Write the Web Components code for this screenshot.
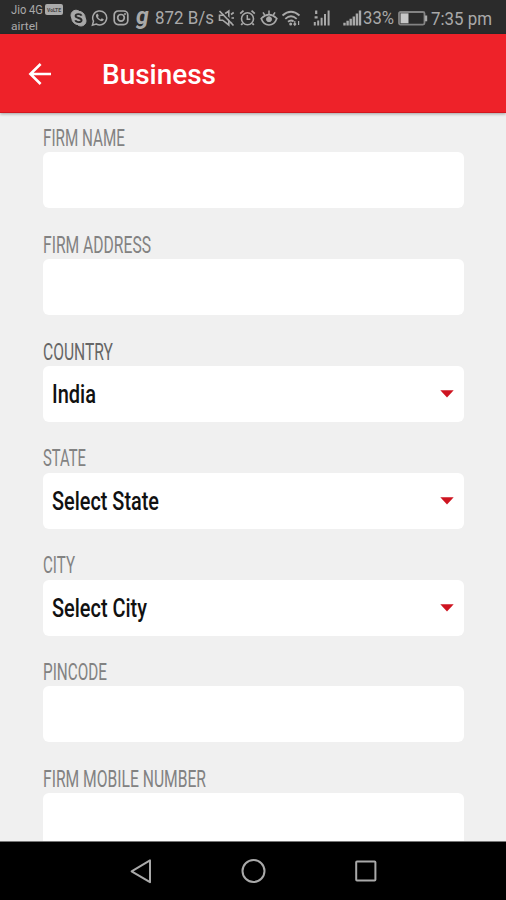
<!DOCTYPE html>
<html lang="en">
<head>
<meta charset="utf-8">
<title>Business</title>
<style>
html,body{margin:0;height:100%;overflow:hidden;background:#f0f0f0}
</style>
</head>
<body>
<phone-screen></phone-screen>
<script>
const define = (name, html, setup) => customElements.define(name, class extends HTMLElement {
  connectedCallback() {
    if (this.shadowRoot) return;
    const root = this.attachShadow({ mode: 'open' });
    const t = document.createElement('template');
    t.innerHTML = html;
    root.append(t.content.cloneNode(true));
    if (setup) setup(this, root);
  }
});

// One line of text condensed to a given width.
define('fit-text', `
<style>:host{display:block;flex:none}svg{display:block;overflow:visible}text{fill:currentColor;font-family:Roboto,"Liberation Sans",sans-serif}</style>
<svg><text x="0" lengthAdjust="spacingAndGlyphs"></text></svg>`, (el, root) => {
  const w = +el.getAttribute('width'), s = +el.getAttribute('size');
  const svg = root.querySelector('svg'), text = root.querySelector('text');
  const h = Math.round(s * 1.2);
  svg.setAttribute('width', w); svg.setAttribute('height', h);
  text.setAttribute('y', h / 2 + s * 0.355);
  text.setAttribute('textLength', w);
  text.setAttribute('font-size', s);
  text.setAttribute('font-weight', el.getAttribute('weight') || 400);
  text.textContent = el.getAttribute('text');
});

const icons = {
  skype: [17, `<circle cx="6" cy="6.2" r="5" fill="currentColor"/><circle cx="8.5" cy="9" r="6.7" fill="currentColor"/><circle cx="11" cy="12" r="5" fill="currentColor"/><path d="M11.6 6.7C10.7 4.6 5.6 4.6 5.6 7c0 2.5 6 1.5 6 4.2 0 2.6-5.5 2.4-6.3.1" stroke="#2b2b2b" stroke-width="1.9"/>`],
  whatsapp: [17, `<path d="M1.4 16.2l1.1-4A7 7 0 1 1 5.2 15z" stroke-width="1.5"/><path d="M5.7 5.1c.8-.6 1.3-.2 2 1.8l-.8 1c.7 1.3 1.5 2 2.8 2.5l1-1.1 2 1c.2 1.3-1.3 2.1-2.6 1.8-2.8-.7-5.4-3.6-5.2-5.5 0-.6.4-1.2.8-1.5z" fill="currentColor" stroke="none"/>`],
  insta: [16, `<rect x="1.2" y="2" width="13.6" height="13.6" rx="4" stroke-width="1.7"/><circle cx="8" cy="8.8" r="3.3" stroke-width="1.7"/><circle cx="12" cy="4.9" r="1" fill="currentColor" stroke="none"/>`],
  mute: [17, `<path d="M1.5 6.2h3.2L10.8 2v14L4.7 11.2H1.5zM13 5.5l2.7-2M13.5 9h2.5M13 12.5l2 1" stroke-width="1.6"/><path d="M2.5 1l14 14" stroke="#2b2b2b" stroke-width="1.6"/><path d="M1.5 2l14 14.5" stroke-width="1.7"/>`],
  alarm: [17, `<circle cx="8.5" cy="9.7" r="6" stroke-width="1.6"/><path d="M1.2 4.6l3.3-3M15.8 4.6l-3.3-3M3.6 14.4L2.2 16M13.4 14.4l1.4 1.6" stroke-width="1.8"/><path d="M8.3 6v4.2h3" stroke-width="1.5"/>`],
  eye: [18, `<path d="M1.2 9.5Q9 1.8 16.8 9.5 14.5 16 9 16T1.2 9.5z" stroke-width="1.7"/><circle cx="9" cy="10.2" r="2.5" fill="currentColor"/><path d="M9 5V1.6M4.7 6L3 3.3M13.3 6L15 3.3" stroke-width="1.5"/>`],
  wifi: [20, `<path d="M1.5 6.5Q10-1 18.5 6.5M4.3 9.8Q10 4.6 15.7 9.8M7 12.8q3-2.5 5.6-.3" stroke-width="1.8"/><circle cx="9.7" cy="15" r="1.5" fill="currentColor" stroke="none"/><path d="M13.8 12v4m-1.3-1.4l1.3 1.6 1.3-1.6M17.6 16v-4" stroke-width="1.2"/>`],
  sigx: [18, `<path d="M1.8 13v3.4M5.2 11.5v4.9M8.6 8.7v7.7M12 5v11.4M15.6 1.6v14.8" stroke-width="2"/><path d="M3.2 1.4v3.6M1.6 8.3h3" stroke-width="2.2"/>`],
  sig: [19, `<path d="M1.5 13.7v2.7M4.6 11.8v4.6M7.7 9.7v6.7M10.8 7.4v9M13.9 4.6v11.8M17 1.6v14.8" stroke-width="2.4"/>`],
  battery: [30, `<rect x="1" y="3" width="25.5" height="12.6" rx="1.5" stroke-width="1.8" opacity=".7"/><rect x="2.5" y="4.3" width="8" height="10" fill="#c8c8c8" stroke="none"/><path d="M28 6.5v5.8" stroke-width="2.4"/>`]
};
define('status-icon', `<style>:host{display:block;flex:none}svg{display:block;fill:none;stroke:currentColor}</style>`, (el, root) => {
  const [w, body] = icons[el.getAttribute('name')];
  const box = document.createElement('div');
  box.innerHTML = `<svg width="${w}" height="18" viewBox="0 0 ${w} 18">${body}</svg>`;
  root.append(box);
});

define('status-bar', `
<style>
:host{display:flex;align-items:center;height:34px;padding:1px 0 0 11px;box-sizing:border-box;background:#2b2b2b;color:#a9a9a9}
.carrier{width:59px;display:flex;flex-direction:column;gap:2px}
.top{display:flex;align-items:center;gap:2px}
.volte{width:18px;height:11px;border-radius:2px;background:#aaa;color:#444;display:flex;align-items:center;justify-content:center}
.g{font:italic 700 23px/20px Roboto,sans-serif;width:12px;margin:-1px 7px 0 7px}
</style>
<div class="carrier"><div class="top"><fit-text text="Jio 4G" width="32" size="12"></fit-text><span class="volte"><fit-text text="VoLTE" width="14" size="6" weight="700"></fit-text></span></div><fit-text text="airtel" width="27" size="11.5"></fit-text></div>
<status-icon name="skype"></status-icon>
<status-icon name="whatsapp" style="margin-left:4px"></status-icon>
<status-icon name="insta" style="margin-left:5px"></status-icon>
<span class="g">g</span>
<fit-text text="872 B/s" width="59" size="18"></fit-text>
<status-icon name="mute" style="margin-left:4px"></status-icon>
<status-icon name="alarm" style="margin-left:4px"></status-icon>
<status-icon name="eye" style="margin-left:4px"></status-icon>
<status-icon name="wifi" style="margin-left:3px"></status-icon>
<status-icon name="sigx" style="margin-left:12px"></status-icon>
<status-icon name="sig" style="margin-left:12px"></status-icon>
<fit-text text="33%" width="31" size="18" style="margin-left:1px"></fit-text>
<status-icon name="battery" style="margin-left:4px"></status-icon>
<fit-text text="7:35 pm" width="61" size="18.5" style="margin-left:3px"></fit-text>`);

define('app-bar', `
<style>
:host{display:flex;align-items:center;height:79px;box-sizing:border-box;padding:2px 0 0 28px;gap:50px;background:#ee2229;border-bottom:1px solid #d3161e;color:#fff;box-shadow:0 1px 3px #0005;z-index:1}
svg{display:block;margin-top:-1px}
</style>
<svg width="24" height="24" viewBox="0 0 24 24" fill="none" stroke="#fff" stroke-width="2.6"><path d="M23 12H2.5M12.6 2L2.4 12l10.2 10"/></svg>
<fit-text text="Business" width="114" size="27.5" weight="500"></fit-text>`);

define('form-field', `
<style>
:host{display:block;height:84px;margin-bottom:22.9px}
.label{height:28px;display:flex;align-items:center;box-sizing:border-box;padding-bottom:.5px;color:#828282}
:host([dark]) .label{color:#666}
.box{height:56px;box-sizing:border-box;display:flex;align-items:center;justify-content:space-between;padding:0 10px 1px 9px;background:#fff;border-radius:6px;color:#111}
</style>
<div class="label"></div><div class="box"><slot></slot></div>`, (el, root) => {
  root.querySelector('.label').innerHTML = `<fit-text text="${el.getAttribute('label')}" width="${el.getAttribute('label-width')}" size="23.5" weight="400"></fit-text>`;
});

define('drop-arrow', `<style>:host{display:block;padding-top:1px}svg{display:block}</style><svg width="14" height="8"><path d="M.3 .3h13.4L7 7.6z" fill="#ce1420"/></svg>`);

define('nav-bar', `
<style>
:host{display:flex;justify-content:center;gap:87px;height:59px;box-sizing:border-box;padding:16px 0 0 0;background:#000;border-top:1px solid #777;z-index:1}
svg{display:block;fill:none;stroke:#a9a9a9;stroke-width:2}
</style>
<svg width="26" height="26"><path d="M23 2.4v21.8L4.6 13.3z" stroke-linejoin="round"/></svg>
<svg width="26" height="26"><circle cx="13.5" cy="13" r="11"/></svg>
<svg width="26" height="26"><rect x="3.2" y="3.4" width="19.2" height="19.2" rx=".8"/></svg>`);

define('phone-screen', `
<style>
:host{display:flex;flex-direction:column;width:506px;height:900px;background:#f0f0f0;overflow:hidden}
status-bar,app-bar,nav-bar{flex:none;position:relative}
main{flex:1;min-height:0;overflow:hidden;padding:11px 42px 0 43px}
</style>
<status-bar></status-bar><app-bar></app-bar>
<main>
<form-field label="FIRM NAME" label-width="82"></form-field>
<form-field label="FIRM ADDRESS" label-width="108"></form-field>
<form-field label="COUNTRY" label-width="70" dark><fit-text text="India" width="44" size="26" weight="500"></fit-text><drop-arrow></drop-arrow></form-field>
<form-field label="STATE" label-width="43"><fit-text text="Select State" width="107" size="26" weight="500"></fit-text><drop-arrow></drop-arrow></form-field>
<form-field label="CITY" label-width="32"><fit-text text="Select City" width="95" size="26" weight="500"></fit-text><drop-arrow></drop-arrow></form-field>
<form-field label="PINCODE" label-width="64"></form-field>
<form-field label="FIRM MOBILE NUMBER" label-width="163"></form-field>
</main>
<nav-bar></nav-bar>`);
</script>
</body>
</html>
